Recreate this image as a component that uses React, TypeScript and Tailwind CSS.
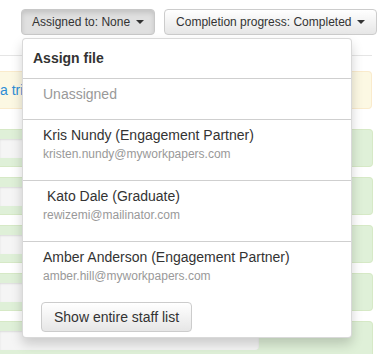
import React from "react";

const staff = [
  { name: "Kris Nundy (Engagement Partner)", email: "kristen.nundy@myworkpapers.com" },
  { name: " Kato Dale (Graduate)", email: "rewizemi@mailinator.com" },
  { name: "Amber Anderson (Engagement Partner)", email: "amber.hill@myworkpapers.com" },
];

function Caret() {
  return (
    <span className="ml-[6px] inline-block h-0 w-0 border-x-[4px] border-t-[4px] border-x-transparent border-t-[#333] align-middle" />
  );
}

function ProgressRow() {
  return (
    <div className="h-[38px] w-[373px] rounded-r-[4px] border border-l-0 border-[#d6e9c6] bg-[#dff0d8] pt-[9px]">
      <div className="h-[19px] w-[259px] rounded-r-[4px] bg-[#f5f5f5] shadow-[inset_0_1px_2px_rgba(0,0,0,0.1)]" />
    </div>
  );
}

function AssignMenu() {
  return (
    <div className="absolute left-[22px] top-[38px] w-[330px] rounded-[4px] border border-[rgba(0,0,0,0.15)] bg-white shadow-[0_6px_12px_rgba(0,0,0,0.175)]">
      <div className="flex h-[39px] items-center px-[10px] text-[14px] font-bold text-[#333]">
        Assign file
      </div>
      <div className="h-[41px] border-t border-[#cfcfcf] px-[20px] pt-[5px] text-[14px] leading-[20px] text-[#999]">
        Unassigned
      </div>
      {staff.map((s, i) => (
        <div
          key={s.email}
          className="h-[61px] border-t border-[#cfcfcf] px-[20px] pt-[5px]"
        >
          <div className="whitespace-pre text-[14px] leading-[20px] text-[#333]">{s.name}</div>
          <div className="text-[12px] leading-[18px] text-[#999]">{s.email}</div>
        </div>
      ))}
      <div className="h-[35px] pl-[18px]">
        <button className="h-[30px] rounded-[4px] border border-[#ccc] bg-[linear-gradient(to_bottom,#fff,#e6e6e6)] px-[12px] text-[14px] text-[#333]">
          Show entire staff list
        </button>
      </div>
    </div>
  );
}

export default function App() {
  return (
    <div className="relative h-[354px] w-[382px] overflow-hidden bg-white font-['Liberation_Sans',Arial,sans-serif]">
      <div className="flex gap-[9px] pl-[21px] pt-[9px]">
        <button className="flex h-[26px] items-center rounded-[4px] border border-[#c8c8c8] bg-[#e0e0e0] px-[10px] text-[12px] text-[#333] shadow-[inset_0_3px_5px_rgba(0,0,0,0.125)]">
          Assigned to: None
          <Caret />
        </button>
        <button className="flex h-[26px] items-center rounded-[4px] border border-[#ccc] bg-[linear-gradient(to_bottom,#fff,#e6e6e6)] px-[11px] text-[12px] text-[#333]">
          Completion progress: Completed
          <Caret />
        </button>
      </div>

      <div className="mt-[20px] h-px w-[372px] bg-[#e5e5e5]" />

      <div className="mt-[15px] flex h-[38px] w-[372px] items-center rounded-r-[4px] border border-l-0 border-[#faebcc] bg-[#fcf8e3] text-[14px] text-[#2d8dd6]">
        a trial
      </div>

      <div className="mt-[20px] flex flex-col gap-[10px]">
        <ProgressRow />
        <ProgressRow />
        <ProgressRow />
        <ProgressRow />
        <ProgressRow />
      </div>

      <AssignMenu />
    </div>
  );
}
